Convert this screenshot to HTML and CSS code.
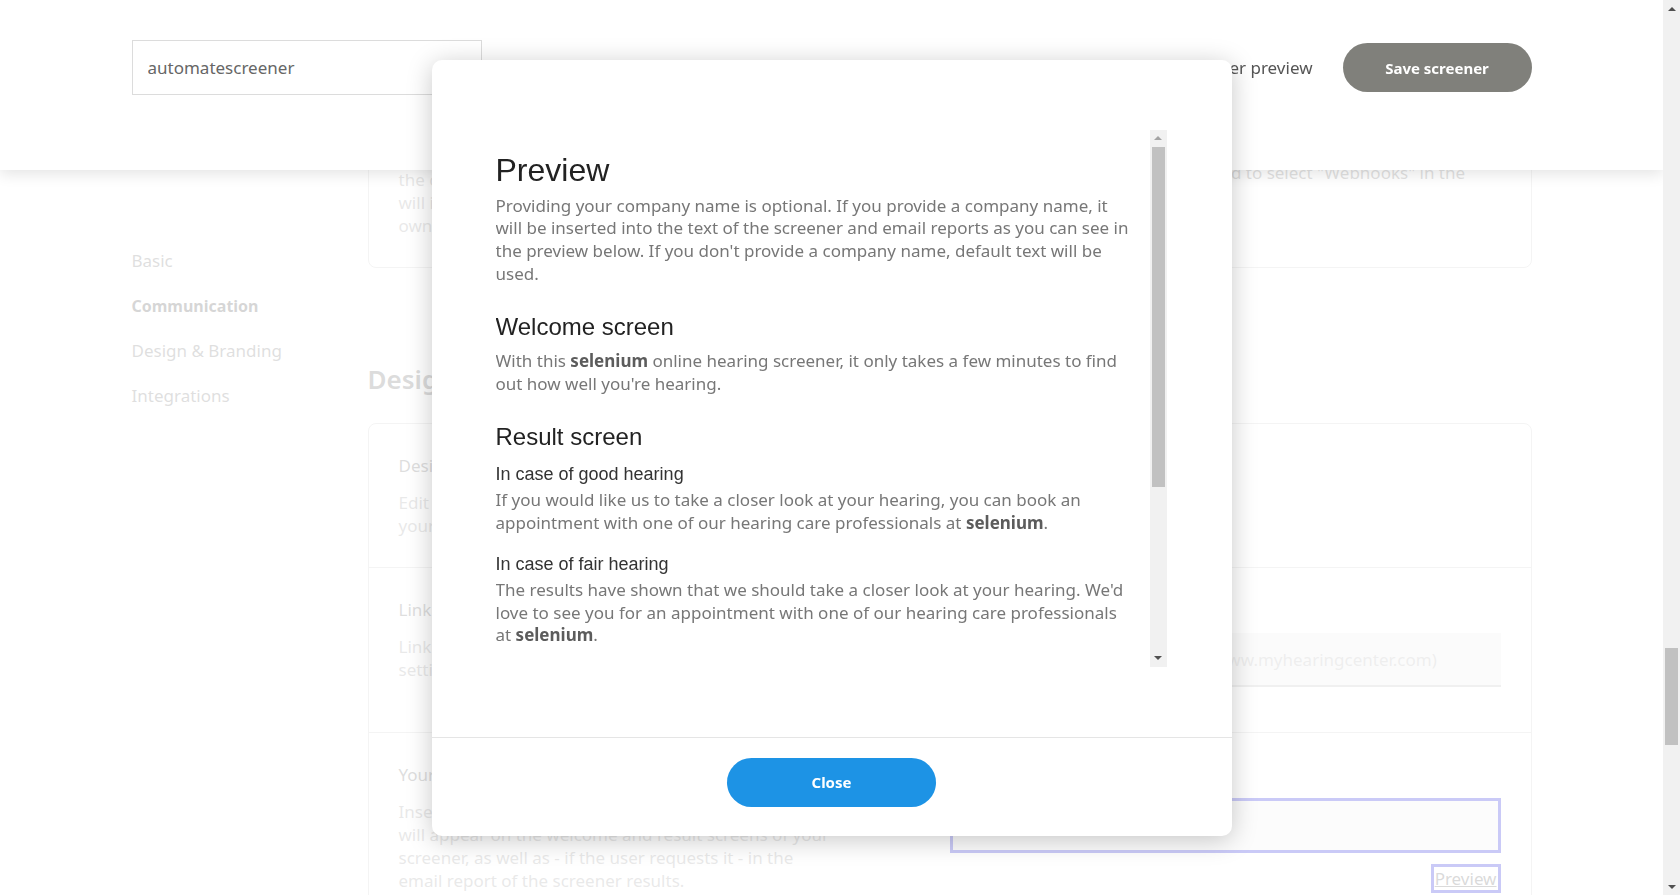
FILE: index.html
```html
<!DOCTYPE html>
<html lang="en">
<head>
<meta charset="utf-8">
<title>Screener settings</title>
<link rel="stylesheet" href="styles.css">
</head>
<body>
<header class="topbar">
  <div class="topbar-inner">
    <input class="name-input" type="text" value="automatescreener" aria-label="Screener name">
    <div class="topbar-actions">
      <a class="preview-link" href="#">Screener preview</a>
      <button class="btn-save" type="button">Save screener</button>
    </div>
  </div>
</header>

<div class="layout">
  <nav class="sidenav">
    <a class="sidenav-link" href="#basic">Basic</a>
    <a class="sidenav-link is-active" href="#communication">Communication</a>
    <a class="sidenav-link" href="#design">Design &amp; Branding</a>
    <a class="sidenav-link" href="#integrations">Integrations</a>
  </nav>

  <main class="content">
    <section class="section" id="basic">
      <h2 class="section-title">Basic</h2>
      <div class="card">
        <div class="row">
          <div class="row-info">
            <h3 class="row-title">Screener name</h3>
            <p class="row-desc">The name of the screener is only visible to you and helps you to recognise it in your overview.</p>
          </div>
          <div class="row-field">
            <label class="field-label">Name</label>
            <input class="text-input" type="text" placeholder="Screener name">
          </div>
        </div>
        <div class="row">
          <div class="row-info">
            <h3 class="row-title">Language</h3>
            <p class="row-desc">Choose the language in which the screener is shown to your visitors.</p>
          </div>
          <div class="row-field">
            <label class="field-label">Language</label>
            <input class="text-input" type="text" placeholder="English">
          </div>
        </div>
      </div>
    </section>

    <section class="section" id="communication">
      <h2 class="section-title">Communication</h2>
      <div class="card">
        <div class="row">
          <div class="row-info">
            <h3 class="row-title">Email notifications</h3>
            <p class="row-desc">Choose who receives an email when a screener has been completed.</p>
          </div>
          <div class="row-field">
            <label class="field-label">Email address</label>
            <input class="text-input" type="text" placeholder="name@myhearingcenter.com">
          </div>
        </div>
      </div>
      <div class="card">
        <div class="row">
          <div class="row-info">
            <h3 class="row-title">Webhooks</h3>
            <p class="row-desc">Use a webhook to connect your own software. With it, the contact details and the test results of each visitor will immediately be sent to that address, so that your own system can process them right away.</p>
          </div>
          <div class="row-field">
            <label class="field-label">Zapier</label>
            <p class="field-help">When you create a Zap you will need to select "Webhooks" in the trigger step of your Zap.</p>
          </div>
        </div>
      </div>
    </section>

    <section class="section" id="design">
      <h2 class="section-title">Design &amp; Branding</h2>
      <div class="card">
        <div class="row">
          <div class="row-info">
            <h3 class="row-title">Design</h3>
            <p class="row-desc">Edit the colours and fonts of the screener to match your brand identity.</p>
          </div>
          <div class="row-field">
            <label class="field-label">Template</label>
            <button class="btn-ghost" type="button">Edit design</button>
          </div>
        </div>
        <div class="row">
          <div class="row-info">
            <h3 class="row-title">Link to your website</h3>
            <p class="row-desc">Link your website so users can find you. Adjust the settings below if needed.</p>
          </div>
          <div class="row-field">
            <label class="field-label">Website</label>
            <input class="text-input text-input--wide" type="text" placeholder="The URL of your website (e.g. www.myhearingcenter.com)">
          </div>
        </div>
        <div class="row">
          <div class="row-info">
            <h3 class="row-title">Your company name</h3>
            <p class="row-desc">Insert the name of your hearing care store. The name will appear on the welcome and result screens of your screener, as well as - if the user requests it - in the email report of the screener results.</p>
          </div>
          <div class="row-field">
            <label class="field-label">Company name</label>
            <div class="company-box"></div>
            <div class="field-actions"><a class="preview-anchor" href="#">Preview</a></div>
          </div>
        </div>
        <div class="row">
          <div class="row-info">
            <h3 class="row-title">Brand colour</h3>
            <p class="row-desc">Choose the main colour of the buttons and links that are shown in your screener.</p>
          </div>
          <div class="row-field">
            <label class="field-label">Colour</label>
          </div>
        </div>
      </div>
    </section>

    <section class="section" id="integrations">
      <h2 class="section-title">Integrations</h2>
      <div class="card">
        <div class="row">
          <div class="row-info">
            <h3 class="row-title">Zapier</h3>
            <p class="row-desc">Connect the screener to thousands of other applications with Zapier.</p>
          </div>
          <div class="row-field"><label class="field-label">Status</label></div>
        </div>
        <div class="row">
          <div class="row-info">
            <h3 class="row-title">API key</h3>
            <p class="row-desc">Use this key to access the results of your screener through our API.</p>
          </div>
          <div class="row-field"><label class="field-label">Key</label></div>
        </div>
      </div>
    </section>
  </main>
</div>

<div class="backdrop"></div>

<div class="modal" role="dialog" aria-label="Preview">
  <div class="modal-body">
    <div class="modal-scroll">
      <div class="modal-text">
        <h1 class="modal-title">Preview</h1>
        <p>Providing your company name is optional. If you provide a company name, it will be inserted into the text of the screener and email reports as you can see in the preview below. If you don't provide a company name, default text will be used.</p>

        <h3 class="modal-h3">Welcome screen</h3>
        <p>With this <strong>selenium</strong> online hearing screener, it only takes a few minutes to find out how well you're hearing.</p>

        <h3 class="modal-h3">Result screen</h3>
        <div class="case">
          <h4 class="modal-h4">In case of good hearing</h4>
          <p>If you would like us to take a closer look at your hearing, you can book an appointment with one of our hearing care professionals at <strong>selenium</strong>.</p>
        </div>
        <div class="case">
          <h4 class="modal-h4">In case of fair hearing</h4>
          <p>The results have shown that we should take a closer look at your hearing. We'd love to see you for an appointment with one of our hearing care professionals at <strong>selenium</strong>.</p>
        </div>
        <div class="case">
          <h4 class="modal-h4">In case of poor hearing</h4>
          <p>The results have shown that you may have a hearing loss. We recommend that you make an appointment with one of our hearing care professionals at <strong>selenium</strong> as soon as possible.</p>
        </div>

        <h3 class="modal-h3">Email report</h3>
        <p>The email report contains the results of the screener and an invitation to visit <strong>selenium</strong> for a full hearing test.</p>
      </div>
    </div>
    <div class="scrollbar modal-scrollbar" aria-hidden="true">
      <span class="sb-btn sb-up sb-up--disabled"></span>
      <span class="sb-track"><span class="sb-thumb sb-thumb--modal"></span></span>
      <span class="sb-btn sb-down"></span>
    </div>
  </div>
  <div class="modal-footer">
    <button class="btn-close" type="button">Close</button>
  </div>
</div>

<div class="scrollbar page-scrollbar" aria-hidden="true">
  <span class="sb-btn sb-up"></span>
  <span class="sb-track"><span class="sb-thumb sb-thumb--page"></span></span>
  <span class="sb-btn sb-down"></span>
</div>

<script src="script.js"></script>
</body>
</html>
```

FILE: styles.css
```css
* { box-sizing: border-box; }

html {
  height: 100%;
  overflow: hidden;
  background: #fff;
}

body {
  margin: 0;
  height: 100%;
  overflow: hidden;
  padding-right: 17px;
  font-family: "Noto Sans", "Open Sans", sans-serif;
  font-size: 17px;
  color: #333;
  background: #fff;
}

/* Scrollbars (classic look) */
.scrollbar {
  width: 17px;
  display: flex;
  flex-direction: column;
  background: #f1f1f1;
}
.sb-btn {
  flex: none;
  height: 17px;
  display: flex;
  align-items: center;
  justify-content: center;
}
.sb-up::before,
.sb-down::before {
  content: "";
  width: 0;
  height: 0;
  border-left: 4px solid transparent;
  border-right: 4px solid transparent;
}
.sb-up::before { border-bottom: 4px solid #505050; }
.sb-down::before { border-top: 4px solid #505050; }
.sb-up--disabled::before { border-bottom-color: #a3a3a3; }
.sb-track {
  flex: 1;
  position: relative;
}
.sb-thumb {
  position: absolute;
  left: 2px;
  right: 2px;
  background: #c1c1c1;
}
.page-scrollbar {
  position: fixed;
  top: 0;
  right: 0;
  bottom: 0;
  z-index: 40;
}
.sb-thumb--page { top: 631px; height: 97px; }
.modal-scrollbar { flex: none; }
.sb-thumb--modal { top: 0; height: 340px; }

/* Top bar */
.topbar {
  position: fixed;
  top: 0;
  left: 0;
  right: 17px;
  height: 170px;
  background: #fff;
  box-shadow: 0 4px 14px rgba(0, 0, 0, 0.11);
  z-index: 20;
}
.topbar-inner {
  max-width: 1400px;
  margin: 0 auto;
  padding-top: 40px;
  display: flex;
  align-items: center;
  justify-content: space-between;
}
.name-input {
  width: 350px;
  height: 55px;
  border: 1px solid #dcdcdc;
  padding: 0 15px;
  font-family: "Noto Sans", sans-serif;
  font-size: 17px;
  color: #666;
  background: #fff;
  outline: none;
}
.topbar-actions {
  display: flex;
  align-items: center;
  gap: 30px;
}
.preview-link {
  font-size: 17px;
  color: #555;
  text-decoration: none;
}
.btn-save {
  width: 189px;
  height: 49px;
  border: 0;
  border-radius: 25px;
  background: #80807b;
  color: #fff;
  font-family: "Noto Sans", sans-serif;
  font-size: 15px;
  font-weight: 700;
}

/* Page layout */
.layout {
  max-width: 1400px;
  height: 100%;
  margin: 0 auto;
  display: flex;
}
.sidenav {
  width: 236px;
  flex: none;
  padding-top: 249px;
  display: flex;
  flex-direction: column;
  gap: 21px;
}
.sidenav-link {
  font-size: 17px;
  line-height: 24px;
  color: #7f7f7f;
  text-decoration: none;
}
.sidenav-link.is-active {
  font-size: 16px;
  color: #5b5b5b;
  font-weight: 700;
}

.content {
  flex: 1;
  min-width: 0;
  height: 100%;
  overflow-y: auto;
  scrollbar-width: none;
  padding: 230px 0 160px;
}
.section + .section { margin-top: 96px; }
.section-title {
  margin: 0 0 28px;
  font-size: 26px;
  line-height: 31px;
  font-weight: 600;
  color: #737373;
}
.card {
  border: 1px solid #d3d3d3;
  border-radius: 8px;
  background: #fff;
}
.card + .card { margin-top: 30px; }

.row {
  display: grid;
  grid-template-columns: 1fr 1fr;
  padding: 30px;
}
.row + .row { border-top: 1px solid #d3d3d3; }
.row-info { padding-right: 119px; }
.row-title {
  margin: 0;
  font-size: 17px;
  line-height: 24px;
  font-weight: 400;
  color: #7b7b7b;
}
.row-desc {
  margin: 13px 0 0;
  font-size: 17px;
  line-height: 23px;
  color: #a7a7a7;
}
.field-label {
  display: block;
  font-size: 17px;
  line-height: 24px;
  color: #7b7b7b;
}
.text-input {
  display: block;
  width: 100%;
  height: 54px;
  margin: 11px 0 15px;
  border: 0;
  border-bottom: 2px solid #c3c3c3;
  background: #efefef;
  padding: 0 15px;
  font-family: "Noto Sans", sans-serif;
  font-size: 17px;
  color: #555;
}
.text-input--wide { padding-left: 28px; }
.text-input::placeholder { color: #bbbbbb; }
.field-help {
  margin: 29px 0 0;
  font-size: 17px;
  line-height: 23px;
  color: #8b8b8b;
}
.btn-ghost {
  margin-top: 11px;
  height: 40px;
  padding: 0 20px;
  border: 1px solid #bbb;
  border-radius: 20px;
  background: #fff;
  font-family: "Noto Sans", sans-serif;
  font-size: 15px;
  color: #7b7b7b;
}
.company-box {
  margin-top: 11px;
  height: 55px;
  border: 3px solid #2f2fdf;
  background: #f3f3f3;
}
.field-actions {
  margin-top: 11px;
  display: flex;
  justify-content: flex-end;
}
.preview-anchor {
  border: 3px solid #2f2fdf;
  padding: 0 1px;
  font-size: 17px;
  line-height: 23px;
  color: #6b6b6b;
  text-decoration: underline;
}

/* Modal */
.backdrop {
  position: fixed;
  top: 0;
  left: 0;
  bottom: 0;
  right: 17px;
  background: rgba(255, 255, 255, 0.75);
  z-index: 10;
}
.modal {
  position: fixed;
  top: 0;
  left: 0;
  bottom: 0;
  right: 17px;
  margin: auto;
  width: 800px;
  height: 776px;
  background: #fff;
  border-radius: 10px;
  box-shadow: 0 4px 26px rgba(0, 0, 0, 0.22);
  z-index: 30;
  display: flex;
  flex-direction: column;
}
.modal-body {
  flex: 1;
  min-height: 0;
  padding: 70px 65px 70px 64px;
  display: flex;
}
.modal-scroll {
  flex: 1;
  min-width: 0;
  overflow: hidden;
}
.modal-text {
  padding: 23px 18px 54px 0;
}
.modal-text p {
  margin: 0;
  font-size: 17px;
  line-height: 22.86px;
  color: #777;
}
.modal-text strong {
  font-weight: 700;
  color: #5c5c5c;
}
.modal-title {
  margin: 0 0 7px;
  font-family: "Liberation Sans", Arial, sans-serif;
  font-size: 32px;
  line-height: 35px;
  font-weight: 400;
  color: #222;
}
.modal-h3 {
  margin: 28px 0 10px;
  font-family: "Liberation Sans", Arial, sans-serif;
  font-size: 24px;
  line-height: 1.1;
  font-weight: 400;
  color: #222;
}
.modal-h4 {
  margin: 15px 0 4px;
  font-family: "Liberation Sans", Arial, sans-serif;
  font-size: 18px;
  line-height: 1.1;
  font-weight: 400;
  color: #333;
}
.case + .case { margin-top: 20px; }
.modal-footer {
  border-top: 1px solid #e5e5e5;
  padding: 20px 0 29px;
  display: flex;
  justify-content: center;
}
.btn-close {
  width: 209px;
  height: 49px;
  border: 0;
  border-radius: 25px;
  background: #1d93e5;
  color: #fff;
  font-family: "Noto Sans", sans-serif;
  font-size: 15px;
  font-weight: 700;
}
```

FILE: script.js
```js
(function () {
  function place() {
    var content = document.querySelector('.content');
    var title = document.querySelector('#design .section-title');
    if (!content || !title) return;
    var delta = title.getBoundingClientRect().top - 364;
    content.scrollTop = Math.round(content.scrollTop + delta);
  }
  place();
  window.addEventListener('load', place);
})();
```
